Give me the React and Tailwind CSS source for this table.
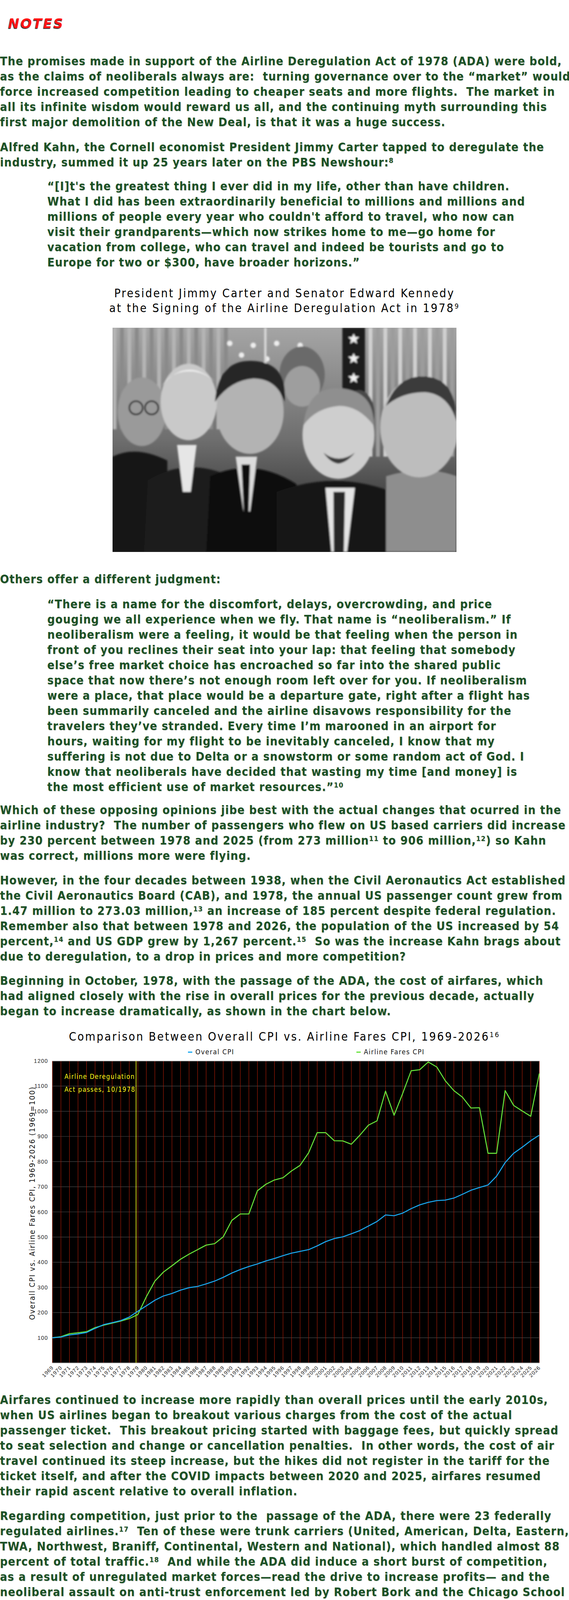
import React from "react";

// chart data read off the reference, index 0 = 1969
const fares = [
  100, 104, 116, 120, 124, 140, 150, 158, 166, 176, 192,
  263, 325, 361, 386, 412, 432, 450, 468, 474, 501,
  566, 592, 592, 684, 710, 727, 736, 763, 785, 835,
  915, 915, 883, 882, 869, 905, 945, 962, 1080, 984,
  1070, 1161, 1165, 1196, 1176, 1121, 1082, 1056, 1013, 1014,
  833, 833, 1082, 1023, 1001, 980, 1150,
];
const overall = [
  100, 103, 111, 115, 121, 137, 152, 160, 168, 182, 205,
  227, 249, 266, 276, 289, 299, 304, 314, 325, 340,
  357, 371, 383, 393, 405, 415, 426, 436, 443, 450,
  465, 482, 494, 501, 513, 526, 544, 562, 588, 585,
  595, 613, 628, 638, 645, 647, 655, 670, 686, 697,
  707, 742, 796, 833, 857, 883, 905,
];

const X0 = 134;
const X1 = 1380;
const STEP = (X1 - X0) / 57;
const PT = 10;
const PB = 783;
const yOf = (v) => PB - (v * (PB - PT)) / 1200;
const xOf = (i) => X0 + i * STEP;

// ^n^ in a line marks a footnote number
const renderLine = (s) =>
  s.split(/\^(\d+)\^/).map((part, i) =>
    i % 2 ? (
      <sup key={i} className="text-[0.6em]">
        {part}
      </sup>
    ) : (
      part
    ),
  );

function Para({ lines, className = "" }) {
  return (
    <div className={className}>
      {lines.map((l, i) => (
        <div key={i} className="whitespace-pre">
          {renderLine(l)}
        </div>
      ))}
    </div>
  );
}

const p1 = [
  "The promises made in support of the Airline Deregulation Act of 1978 (ADA) were bold,",
  "as the claims of neoliberals always are:  turning governance over to the “market” would",
  "force increased competition leading to cheaper seats and more flights.  The market in",
  "all its infinite wisdom would reward us all, and the continuing myth surrounding this",
  "first major demolition of the New Deal, is that it was a huge success.",
];
const p2 = [
  "Alfred Kahn, the Cornell economist President Jimmy Carter tapped to deregulate the",
  "industry, summed it up 25 years later on the PBS Newshour:^8^",
];
const q1 = [
  "“[I]t's the greatest thing I ever did in my life, other than have children.",
  "What I did has been extraordinarily beneficial to millions and millions and",
  "millions of people every year who couldn't afford to travel, who now can",
  "visit their grandparents—which now strikes home to me—go home for",
  "vacation from college, who can travel and indeed be tourists and go to",
  "Europe for two or $300, have broader horizons.”",
];
const q2 = [
  "“There is a name for the discomfort, delays, overcrowding, and price",
  "gouging we all experience when we fly. That name is “neoliberalism.” If",
  "neoliberalism were a feeling, it would be that feeling when the person in",
  "front of you reclines their seat into your lap: that feeling that somebody",
  "else’s free market choice has encroached so far into the shared public",
  "space that now there’s not enough room left over for you. If neoliberalism",
  "were a place, that place would be a departure gate, right after a flight has",
  "been summarily canceled and the airline disavows responsibility for the",
  "travelers they’ve stranded. Every time I’m marooned in an airport for",
  "hours, waiting for my flight to be inevitably canceled, I know that my",
  "suffering is not due to Delta or a snowstorm or some random act of God. I",
  "know that neoliberals have decided that wasting my time [and money] is",
  "the most efficient use of market resources.”^10^",
];
const pWhich = [
  "Which of these opposing opinions jibe best with the actual changes that ocurred in the",
  "airline industry?  The number of passengers who flew on US based carriers did increase",
  "by 230 percent between 1978 and 2025 (from 273 million^11^ to 906 million,^12^) so Kahn",
  "was correct, millions more were flying.",
];
const pHowever = [
  "However, in the four decades between 1938, when the Civil Aeronautics Act established",
  "the Civil Aeronautics Board (CAB), and 1978, the annual US passenger count grew from",
  "1.47 million to 273.03 million,^13^ an increase of 185 percent despite federal regulation.",
  "Remember also that between 1978 and 2026, the population of the US increased by 54",
  "percent,^14^ and US GDP grew by 1,267 percent.^15^  So was the increase Kahn brags about",
  "due to deregulation, to a drop in prices and more competition?",
];
const pBegin = [
  "Beginning in October, 1978, with the passage of the ADA, the cost of airfares, which",
  "had aligned closely with the rise in overall prices for the previous decade, actually",
  "began to increase dramatically, as shown in the chart below.",
];
const pAirfares = [
  "Airfares continued to increase more rapidly than overall prices until the early 2010s,",
  "when US airlines began to breakout various charges from the cost of the actual",
  "passenger ticket.  This breakout pricing started with baggage fees, but quickly spread",
  "to seat selection and change or cancellation penalties.  In other words, the cost of air",
  "travel continued its steep increase, but the hikes did not register in the tariff for the",
  "ticket itself, and after the COVID impacts between 2020 and 2025, airfares resumed",
  "their rapid ascent relative to overall inflation.",
];
const pRegarding = [
  "Regarding competition, just prior to the  passage of the ADA, there were 23 federally",
  "regulated airlines.^17^  Ten of these were trunk carriers (United, American, Delta, Eastern,",
  "TWA, Northwest, Braniff, Continental, Western and National), which handled almost 88",
  "percent of total traffic.^18^  And while the ADA did induce a short burst of competition,",
  "as a result of unregulated market forces—read the drive to increase profits— and the",
  "neoliberal assault on anti-trust enforcement led by Robert Bork and the Chicago School",
  "of Economics,^19^ today only four airlines (American, Delta, Southwest and United) control",
  "nearly 75 percent of the market.^20^  Along with this consolidation came increased",
  "concentration of traffic at a small number of hub airports, complicating inter-city travel",
  "by lengthening travel times and increasing the vulnerability to delays.",
];
const pFurther = [
  "Further, within six years of passage of the ADA, 119 communities lost scheduled service",
  "altogether and an additional 225 experienced service declines of 50 percent or more.^21^",
  "Subsequent to deregulation, the industry also vacillated between boom and bust cycles",
  "in which it made lots of money, and then, when there was a shock, like 9/11 or COVID,",
  "it needed a taxpayer bailout or support program.^22^  In other words, deregulation cut",
  "service while simultaneously privatizing profits and socializing losses.",
];
const pCurrently = [
  "Currently there is an added wrinkle in the cost of flying—surveillance pricing—or what",
  "the industry calls dynamic or personalized pricing, as if it is designed to benefit the",
  "individual passenger rather than the airline’s bottom line.^24^  The companies maintain",
  "that fare shifts are based solely on broad market demand, seat inventory and booking",
  "timing rather than tracking individual user profiles, as if charging more for flights and",
  "seats based on availability is somehow an advantage for consumers.",
];
const pAI = [
  "However, with the advent of unregulated AI, airlines can scour the internet for personal",
  "information such as:  online search activity, the number of airline site visits, other",
  "online purchases, relatives in the destination area, YouTube videos watched and online",
  "likes and shares, before quoting the ticket price.  The goal of such scrutiny is to",
  "determine the highest price that the customer is willing to pay.^25^",
];
const q3 = [
  "“One study found that an airline boosted its own revenue by as much as",
  "six percent by leveraging AI pricing based on consumer information, an",
  "increase that comes at the expense of consumers.”^26^",
];
const pSo = [
  "So when considering whether or not deregulation works, you have to ask, works for",
  "whom?  The result of rescinding government oversight of routes and prices was that",
  "passengers pay more when purchasing tickets, while the managers and owners of the",
  "monopolies that rule the sky reap the benefits.",
];
const q4 = [
  "“Neoliberalism can sound benign. After all, it’s a theory of government",
  "predicated on the government getting out of the way and doing no harm.",
  "But the force that replaces the government when it abdicates its collective",
  "responsibilities is “the market,” and that is a force that is inherently",
  "amoral and ungenerous. The market values profits over people and",
  "commodification over children.”^27^",
];
const pDereg = [
  "Deregulation coupled with a host of other “free market” laws and the lack of any",
  "effective anti-trust enforcement, has been a boon for the top ten percent who were the",
  "beneficiaries of the $80 trillion transfer it enabled,^28^ and airfares, due to the folklore",
  "around the ADA, played a small but significant role in this reallocation.",
];

function Chart() {
  const pts = (arr) => arr.map((v, i) => `${xOf(i).toFixed(1)},${yOf(v).toFixed(1)}`).join(" ");
  const ticks = [100, 200, 300, 400, 500, 600, 700, 800, 900, 1000, 1100, 1200];
  const years = Array.from({ length: 58 }, (_, i) => 1969 + i);
  const yellowX = X0 + 9.8 * STEP;

  return (
    <svg width="1456" height="834" viewBox="0 0 1456 834" className="block font-normal">
      <rect x={X0} y={PT} width={X1 - X0} height={PB - PT} fill="#000" />
      {ticks.slice(0, -1).map((t) => (
        <line key={t} x1={X0} x2={X1} y1={yOf(t)} y2={yOf(t)} stroke="#4a4a4a" strokeWidth="1.2" />
      ))}
      {years.map((y, i) => (
        <line key={y} x1={xOf(i)} x2={xOf(i)} y1={PT} y2={PB} stroke="#a11a06" strokeWidth="1.2" />
      ))}
      <line x1={X0} x2={X1} y1={PT} y2={PT} stroke="#c8c8c8" strokeWidth="1.5" />
      <line x1={X0} x2={X1} y1={PB} y2={PB} stroke="#9a9a9a" strokeWidth="1.5" />
      <line x1={yellowX} x2={yellowX} y1={PT} y2={PB} stroke="#ffff1a" strokeWidth="1.6" />
      <polyline points={pts(fares)} fill="none" stroke="#66e23a" strokeWidth="2.6" strokeLinejoin="round" />
      <polyline points={pts(overall)} fill="none" stroke="#1aa8f0" strokeWidth="2.6" strokeLinejoin="round" />

      <g fill="#ffff1a" fontFamily="'DejaVu Sans Condensed','DejaVu Sans',sans-serif" fontSize="17" fontWeight="normal" letterSpacing="1.4">
        <text x="165" y="56">Airline Deregulation</text>
        <text x="165" y="89">Act passes, 10/1978</text>
      </g>

      <g fill="#222" fontFamily="'Liberation Sans',Arial,sans-serif" fontSize="14" fontWeight="normal" textAnchor="end">
        {ticks.map((t) => (
          <text key={t} x="123" y={yOf(t) + 5}>
            {t}
          </text>
        ))}
      </g>

      <g fill="#222" fontFamily="'Liberation Sans',Arial,sans-serif" fontSize="13.5" fontWeight="normal" textAnchor="end">
        {years.map((y, i) => (
          <text key={y} transform={`translate(${xOf(i) + 4} ${PB + 13}) rotate(-45)`}>
            {y}
          </text>
        ))}
      </g>

      <text
        transform="translate(89 374) rotate(-90)"
        textAnchor="middle"
        fill="#111"
        fontFamily="'DejaVu Sans Condensed','DejaVu Sans',sans-serif"
        fontSize="20"
        fontWeight="normal"
        letterSpacing="1.7"
      >
        Overall CPI vs. Airline Fares CPI, 1969-2026 (1969=100)
      </text>
    </svg>
  );
}

function SigningPhoto() {
  return (
    <svg width="880" height="574" viewBox="0 0 880 574" className="block" preserveAspectRatio="none">
      <defs>
        <linearGradient id="bg1" x1="0" y1="0" x2="0" y2="1">
          <stop offset="0" stopColor="#a5a5a5" />
          <stop offset="0.5" stopColor="#6e6e6e" />
          <stop offset="1" stopColor="#1c1c1c" />
        </linearGradient>
        <filter id="soft1">
          <feGaussianBlur stdDeviation="2.2" />
        </filter>
      </defs>
      <rect width="880" height="574" fill="url(#bg1)" />
      <g filter="url(#soft1)">
        {Array.from({ length: 16 }, (_, i) => (
          <rect key={i} x={i * 19} y="0" width="10" height="260" fill={i % 2 ? "#8a8a8a" : "#b4b4b4"} />
        ))}
        {Array.from({ length: 12 }, (_, i) => (
          <rect key={i} x={655 + i * 19} y="0" width="10" height="330" fill={i % 2 ? "#9c9c9c" : "#d0d0d0"} />
        ))}
        <rect x="588" y="0" width="58" height="230" fill="#1e1e1e" />
        {[28, 78, 128, 178].map((y) => (
          <polygon
            key={y}
            points={`617,${y - 13} 621,${y - 4} 631,${y - 4} 623,${y + 3} 626,${y + 13} 617,${y + 7} 608,${y + 13} 611,${y + 3} 603,${y - 4} 613,${y - 4}`}
            fill="#f2f2f2"
          />
        ))}
        {[[300, 40], [330, 70], [360, 45], [395, 80], [420, 40], [455, 70], [480, 45]].map(([x, y], i) => (
          <circle key={i} cx={x} cy={y} r="7" fill="#eeeeee" />
        ))}
        <rect x="388" y="0" width="6" height="110" fill="#d8d8d8" />

        {/* back row */}
        <ellipse cx="485" cy="120" rx="58" ry="72" fill="#6a6a6a" />
        <ellipse cx="485" cy="150" rx="46" ry="52" fill="#9e9e9e" />
        <ellipse cx="75" cy="215" rx="62" ry="88" fill="#9a9a9a" />
        <circle cx="60" cy="205" r="17" fill="none" stroke="#222" strokeWidth="4" />
        <circle cx="100" cy="205" r="17" fill="none" stroke="#222" strokeWidth="4" />
        <ellipse cx="630" cy="220" rx="40" ry="60" fill="#4a4a4a" />

        {/* suits */}
        <path d="M0 330 Q60 300 140 340 L140 574 L0 574 Z" fill="#121212" />
        <path d="M90 390 Q190 330 300 380 L320 574 L80 574 Z" fill="#1a1a1a" />
        <path d="M250 380 Q360 330 470 400 L480 574 L240 574 Z" fill="#0e0e0e" />
        <path d="M420 420 Q580 360 740 430 L760 574 L420 574 Z" fill="#151515" />
        <path d="M700 380 Q800 350 880 380 L880 574 L700 574 Z" fill="#8e8e8e" />
        <polygon points="165,300 215,300 200,420 180,420" fill="#e6e6e6" />
        <polygon points="315,330 370,330 352,470 335,470" fill="#dcdcdc" />
        <polygon points="330,350 352,350 348,480 336,480" fill="#101010" />
        <polygon points="545,410 620,410 600,574 560,574" fill="#e4e4e4" />
        <polygon points="565,420 595,420 592,574 566,574" fill="#262626" />

        {/* faces */}
        <ellipse cx="195" cy="190" rx="72" ry="98" fill="#c9c9c9" />
        <path d="M125 150 Q190 70 265 140 Q230 110 195 112 Q150 112 125 150 Z" fill="#ededed" />
        <ellipse cx="352" cy="215" rx="86" ry="108" fill="#b3b3b3" />
        <path d="M262 190 Q270 80 360 85 Q450 90 440 190 Q420 130 360 130 Q300 135 262 190 Z" fill="#262626" />
        <ellipse cx="578" cy="275" rx="92" ry="112" fill="#cecece" />
        <path d="M488 250 Q500 150 580 155 Q670 160 668 250 Q630 200 580 200 Q520 205 488 250 Z" fill="#8f8f8f" />
        <path d="M540 320 Q578 350 620 320 Q600 345 578 348 Q556 345 540 320 Z" fill="#3a3a3a" />
        <ellipse cx="785" cy="255" rx="100" ry="128" fill="#bdbdbd" />
        <path d="M700 200 Q730 120 800 125 Q880 130 880 240 Q860 170 800 165 Q740 165 700 200 Z" fill="#3a3a3a" />
      </g>
    </svg>
  );
}

function CabinPhoto() {
  const VX = 292;
  const VY = 335;
  const proj = (x, y, s) => [VX + (x - VX) * s, VY + (y - VY) * s];
  const seats = [];
  const cols = [-230, -70, 90, 230, 400, 540, 690, 850];
  for (let d = 20; d >= 0; d--) {
    const s = 1 / (1 + d * 0.3);
    cols.forEach((cx, c) => {
      const right = c > 3;
      const [x, y] = proj(cx, 530, s);
      const w = 135 * s;
      const h = 260 * s;
      const warm = !right && d > 4;
      seats.push(
        <g key={`${d}-${c}`}>
          <rect x={x} y={y} width={w} height={h} rx={16 * s} fill={warm ? "#a98a6a" : "#c3c7ce"} stroke="#4c525c" strokeWidth={2 * s} />
          {right || (d + c) % 4 === 0 ? (
            <rect x={x} y={y} width={w} height={48 * s} rx={14 * s} fill="#d1271d" />
          ) : null}
          <rect x={x + 24 * s} y={y + 66 * s} width={w - 48 * s} height={62 * s} rx={5 * s} fill="#111a28" />
          <rect x={x + 31 * s} y={y + 73 * s} width={w - 62 * s} height={48 * s} fill={(d + c) % 3 ? "#2e7fbf" : "#56a6d8"} />
        </g>,
      );
    });
  }
  return (
    <svg width="875" height="655" viewBox="0 0 875 655" className="block" preserveAspectRatio="none">
      <defs>
        <linearGradient id="ceil" x1="0" y1="0" x2="0" y2="1">
          <stop offset="0" stopColor="#4f5968" />
          <stop offset="0.4" stopColor="#aeb8c6" />
          <stop offset="1" stopColor="#5d5048" />
        </linearGradient>
        <linearGradient id="binL" x1="0" y1="0" x2="1" y2="0">
          <stop offset="0" stopColor="#6f7a8c" />
          <stop offset="1" stopColor="#cdd4dd" />
        </linearGradient>
        <linearGradient id="binR" x1="1" y1="0" x2="0" y2="1">
          <stop offset="0" stopColor="#9e9886" />
          <stop offset="1" stopColor="#dcd8cd" />
        </linearGradient>
      </defs>
      <rect width="875" height="655" fill="url(#ceil)" />
      <polygon points="0,0 240,0 282,320 0,360" fill="url(#binL)" />
      <polygon points="0,70 230,40 278,290 0,280" fill="#8e98a8" opacity="0.55" />
      <polygon points="0,150 255,150 282,320 0,360" fill="#d2a15d" opacity="0.35" />
      <polygon points="380,0 875,0 875,320 310,320" fill="url(#binR)" />
      <ellipse cx="690" cy="118" rx="80" ry="58" fill="#bfb59e" />
      <ellipse cx="692" cy="118" rx="50" ry="46" fill="#24282e" />
      <rect x="340" y="188" width="300" height="27" rx="4" fill="#dedbd3" />
      <rect x="345" y="190" width="45" height="24" rx="4" fill="#e8751c" />
      <polygon points="240,0 380,0 306,320 282,320" fill="#e4e8ee" />
      <ellipse cx="830" cy="330" rx="48" ry="72" fill="#eef3fa" />
      <ellipse cx="770" cy="320" rx="26" ry="40" fill="#e2e9f2" />
      <polygon points="282,330 304,330 400,655 200,655" fill="#2a2420" />
      {seats}
      <ellipse cx="640" cy="330" rx="16" ry="19" fill="#3b2a1e" />
      <ellipse cx="710" cy="360" rx="24" ry="28" fill="#4a3220" />
      <ellipse cx="760" cy="470" rx="62" ry="58" fill="#7a4f2c" />
      <path d="M330 470 Q400 410 470 450 L460 520 Q400 480 345 520 Z" fill="#c58d6a" />
      <ellipse cx="480" cy="490" rx="40" ry="44" fill="#2e2722" />
      <ellipse cx="850" cy="205" rx="28" ry="36" fill="#b79a74" opacity="0.85" />
    </svg>
  );
}

export default function App() {
  return (
    <div className="h-[6511px] w-full overflow-hidden bg-white pt-[43px] font-['DejaVu_Sans_Condensed','DejaVu_Sans',sans-serif] font-stretch-condensed text-[30px] font-bold leading-[39px] tracking-[1.25px] text-[#1b5126] [text-shadow:1px_1px_1px_rgba(0,0,0,0.22)]">
      <h1 className="ml-[21px] h-[34px] text-[34px] leading-[34px] italic font-bold tracking-[3px] text-[#ff1515] font-['DejaVu_Sans',sans-serif] font-stretch-normal [text-shadow:-1px_2px_1px_#333]">
        NOTES
      </h1>

      <Para className="mt-[60px]" lines={p1} />
      <Para className="mt-[25px]" lines={p2} />
      <Para className="mt-[22px] pl-[121px]" lines={q1} />

      <div className="mt-[41px] text-center font-normal text-black leading-[38px] tracking-[3.1px] [text-shadow:none]">
        <div>President Jimmy Carter and Senator Edward Kennedy</div>
        <div>
          at the Signing of the Airline Deregulation Act in 1978<sup className="text-[0.6em]">9</sup>
        </div>
      </div>

      <div className="mt-[31px] flex justify-center">
        <SigningPhoto />
      </div>

      <Para className="mt-[50px]" lines={["Others offer a different judgment:"]} />
      <Para className="mt-[25px] pl-[121px]" lines={q2} />
      <Para className="mt-[20px]" lines={pWhich} />
      <Para className="mt-[24px]" lines={pHowever} />
      <Para className="mt-[23px]" lines={pBegin} />

      <div className="mt-[26px] text-center font-normal text-black tracking-[3.1px] [text-shadow:none]">
        Comparison Between Overall CPI vs. Airline Fares CPI, 1969-2026<sup className="text-[0.6em]">16</sup>
      </div>

      <div className="mt-[10px] flex h-[20px] items-center pl-[481px] text-[18px] font-normal leading-[20px] tracking-[1.5px] text-[#111] [text-shadow:none]">
        <div className="flex w-[431px] items-center gap-[8px]">
          <span className="h-[3px] w-[11px] bg-[#1aa8f0]" />
          <span>Overal CPI</span>
        </div>
        <div className="flex items-center gap-[8px]">
          <span className="h-[3px] w-[11px] bg-[#66e23a]" />
          <span>Airline Fares CPI</span>
        </div>
      </div>

      <div className="mt-[3px] [text-shadow:none]">
        <Chart />
      </div>

      <Para className="mt-[24px]" lines={pAirfares} />
      <Para className="mt-[24px]" lines={pRegarding} />
      <Para className="mt-[21px]" lines={pFurther} />

      <div className="mt-[26px] text-center font-normal text-black tracking-[7px] [text-shadow:none]">
        Two’s Company, Three’s a Crowd<sup className="text-[0.6em]">23</sup>
      </div>

      <div className="mt-[34px] flex justify-center">
        <CabinPhoto />
      </div>

      <Para className="mt-[39px]" lines={pCurrently} />
      <Para className="mt-[23px]" lines={pAI} />
      <Para className="mt-[23px] pl-[121px]" lines={q3} />
      <Para className="mt-[24px]" lines={pSo} />
      <Para className="mt-[24px] pl-[121px]" lines={q4} />
      <Para className="mt-[22px]" lines={pDereg} />
    </div>
  );
}
